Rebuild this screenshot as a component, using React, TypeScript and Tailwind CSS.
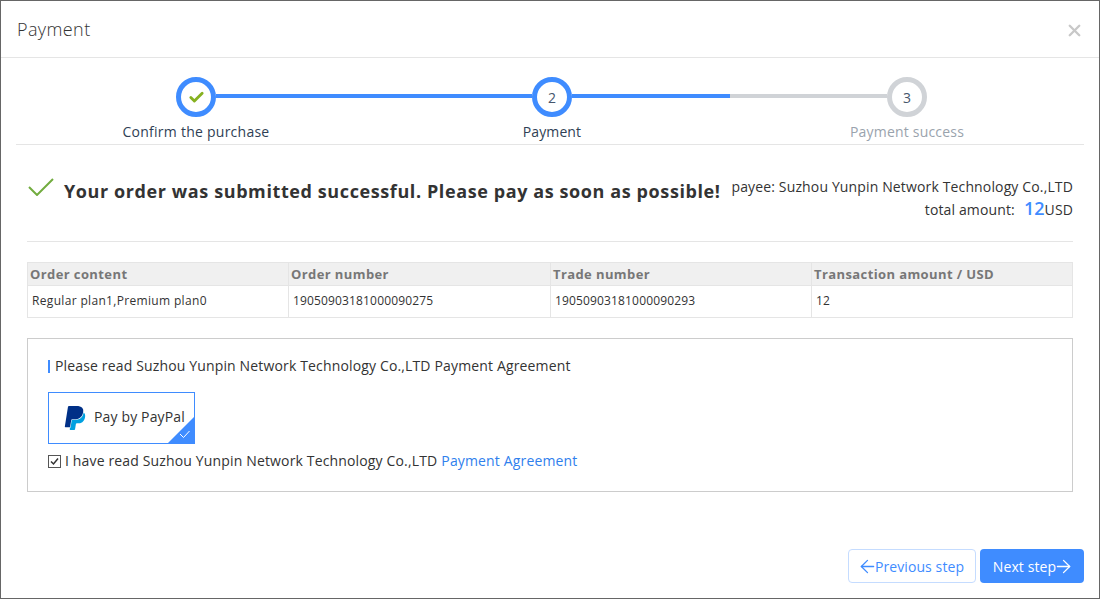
import { ArrowLeft, ArrowRight, Check, X } from "lucide-react";

const columns = [
  { head: "Order content", value: "Regular plan1,Premium plan0", spacing: "tracking-[0.33px]" },
  { head: "Order number", value: "19050903181000090275", spacing: "tracking-[0.15px]" },
  { head: "Trade number", value: "19050903181000090293", spacing: "tracking-[0.15px]" },
  { head: "Transaction amount / USD", value: "12", spacing: "tracking-[0.15px]" },
];

function PayPalLogo() {
  return (
    <svg viewBox="0 0 24 24" className="h-[24px] w-[24px]">
      <path
        fill="#00a0e0"
        d="M21.222 6.917a3.35 3.35 0 0 0-.607-.541c-.013.076-.026.175-.041.254-.93 4.778-4.005 7.201-9.138 7.201h-2.19a.563.563 0 0 0-.556.479l-1.187 7.527h-.506l-.24 1.516a.56.56 0 0 0 .554.647h3.882c.46 0 .85-.334.922-.788.06-.26.76-4.852.816-5.09a.932.932 0 0 1 .923-.788h.58c3.76 0 6.705-1.528 7.565-5.946.36-1.847.174-3.388-.777-4.471z"
      />
      <path
        fill="#003087"
        d="M7.076 21.337H2.47a.641.641 0 0 1-.633-.74L4.944.901C5.026.382 5.474 0 5.998 0h7.46c2.57 0 4.578.543 5.69 1.81 1.01 1.15 1.304 2.42 1.012 4.287-.023.143-.047.288-.077.437-.983 5.05-4.349 6.797-8.647 6.797h-2.19c-.524 0-.968.382-1.05.9l-1.12 7.106z"
      />
    </svg>
  );
}

export default function App() {
  return (
    <div className="flex h-[599px] w-[1100px] flex-col border border-[#666] bg-white font-['Open_Sans',sans-serif] text-[#333]">
      <div className="flex h-[57px] shrink-0 items-center justify-between border-b border-[#e5e5e5] pl-[16px] pr-[15px]">
        <div className="text-[18px] font-light leading-none tracking-[0.4px] text-[#333]">Payment</div>
        <X className="mt-[2px] h-[19px] w-[19px] text-[#c8c8c8]" strokeWidth={3} />
      </div>

      <div className="mx-[15px] grid h-[87px] shrink-0 grid-cols-[356px_356px_1fr] border-b border-[#e5e5e5] pt-[19px] pl-[2px]">
        <div className="flex flex-col items-center">
          <div className="flex w-full items-center">
            <div className="mb-[2px] h-[4px] flex-1" />
            <div className="flex h-[40px] w-[40px] items-center justify-center rounded-full border-[5px] border-[#3f8cff]">
              <Check className="h-[17px] w-[17px] text-[#86b120]" strokeWidth={4} />
            </div>
            <div className="mb-[2px] h-[4px] flex-1 bg-[#3f8cff]" />
          </div>
          <div className="mt-[5px] text-[14px] leading-[20px] tracking-[0.25px] text-[#2f3f55]">Confirm the purchase</div>
        </div>
        <div className="flex flex-col items-center">
          <div className="flex w-full items-center">
            <div className="mb-[2px] h-[4px] flex-1 bg-[#3f8cff]" />
            <div className="flex h-[40px] w-[40px] items-center justify-center rounded-full border-[5px] border-[#3f8cff] text-[14px] text-[#46566c]">
              2
            </div>
            <div className="mb-[2px] h-[4px] flex-1 bg-[#3f8cff]" />
          </div>
          <div className="mt-[5px] text-[14px] leading-[20px] tracking-[0.1px] text-[#2f3f55]">Payment</div>
        </div>
        <div className="flex flex-col items-center">
          <div className="flex w-full items-center">
            <div className="mb-[2px] h-[4px] flex-1 bg-[#d0d3d7]" />
            <div className="flex h-[40px] w-[40px] items-center justify-center rounded-full border-[5px] border-[#d0d3d7] text-[14px] text-[#46566c]">
              3
            </div>
            <div className="mb-[2px] h-[4px] flex-1" />
          </div>
          <div className="mt-[5px] text-[14px] leading-[20px] tracking-[0.2px] text-[#9aa3ad]">Payment success</div>
        </div>
      </div>

      <div className="mx-[26px] flex h-[97px] shrink-0 items-start justify-between border-b border-[#e5e5e5] pt-[30px]">
        <div className="flex items-start">
          <svg viewBox="0 0 26 18" className="mt-[3px] ml-px h-[18px] w-[26px]" fill="none" stroke="#72ac3f" strokeWidth="2">
            <path d="M1 9l8 8L25 1" />
          </svg>
          <div className="ml-[10px] mt-[3px] text-[18px] font-bold leading-[26px] tracking-[0.6px] whitespace-nowrap text-[#333]">
            Your order was submitted successful. Please pay as soon as possible!
          </div>
        </div>
        <div className="text-right text-[14px] leading-[23px] tracking-[0.14px] text-[#333]">
          <div>payee: Suzhou Yunpin Network Technology Co.,LTD</div>
          <div>
            total amount:
            <span className="ml-[9px] text-[18px] font-semibold leading-none tracking-normal text-[#3f8cff]">12</span>
            USD
          </div>
        </div>
      </div>

      <div className="mx-[26px] mt-[20px] grid shrink-0 grid-cols-[261px_262px_261px_1fr] border border-[#e5e5e5]">
        {columns.map((col, i) => (
          <div key={col.head} className={i < 3 ? "border-r border-[#e5e5e5]" : ""}>
            <div className="h-[23px] border-b border-[#e5e5e5] bg-[#f0f0f0] pl-[2px] text-[13px] font-bold leading-[22px] tracking-[0.4px] text-[#777]">
              {col.head}
            </div>
            <div className={`h-[31px] pl-[4px] text-[12px] leading-[30px] text-[#333] ${col.spacing}`}>{col.value}</div>
          </div>
        ))}
      </div>

      <div className="mx-[26px] mt-[20px] h-[154px] shrink-0 border border-[#ccc] pl-[20px] pt-[17px] tracking-[0.15px]">
        <div className="flex items-center text-[14px] leading-[20px] text-[#333]">
          <span className="mr-[5px] h-[13px] w-[2px] bg-[#3f8cff]" />
          Please read Suzhou Yunpin Network Technology Co.,LTD Payment Agreement
        </div>
        <div className="relative mt-[16px] flex h-[52px] w-[147px] items-center border border-[#3f8cff] pl-[14px]">
          <PayPalLogo />
          <span className="mb-[3px] ml-[7px] text-[14px] text-[#333]">Pay by PayPal</span>
          <svg viewBox="0 0 26 26" className="absolute right-0 bottom-0 h-[26px] w-[26px]">
            <path d="M26 0v26H0z" fill="#3f8cff" />
            <path d="M12 17l3.5 3.5L21.5 14" fill="none" stroke="#fff" strokeWidth="1" />
          </svg>
        </div>
        <div className="mt-[7px] flex items-center text-[14px] leading-[20px] text-[#333]">
          <svg viewBox="0 0 13 13" className="mr-[4px] h-[13px] w-[13px]" fill="none">
            <rect x="0.5" y="0.5" width="12" height="12" stroke="#555" />
            <path d="M3 6.5l2.5 2.5L10 3.5" stroke="#333" strokeWidth="1.5" />
          </svg>
          I have read Suzhou Yunpin Network Technology Co.,LTD
          <span className="ml-[4px] text-[#2f80ed]">Payment Agreement</span>
        </div>
      </div>

      <div className="mt-auto flex justify-end gap-[4px] pr-[15px] pb-[15px]">
        <button className="flex h-[34px] w-[128px] items-center justify-center rounded-[4px] border border-[#c5dcff] bg-white text-[14px] tracking-[0.1px] text-[#3f8cff]">
          <ArrowLeft className="-mx-[3px] h-[21px] w-[21px]" strokeWidth={1.5} />
          Previous step
        </button>
        <button className="flex h-[34px] w-[104px] items-center justify-center rounded-[4px] bg-[#3f8cff] text-[14px] tracking-[0.1px] text-white">
          Next step
          <ArrowRight className="-mx-[3px] h-[21px] w-[21px]" strokeWidth={1.5} />
        </button>
      </div>
    </div>
  );
}
